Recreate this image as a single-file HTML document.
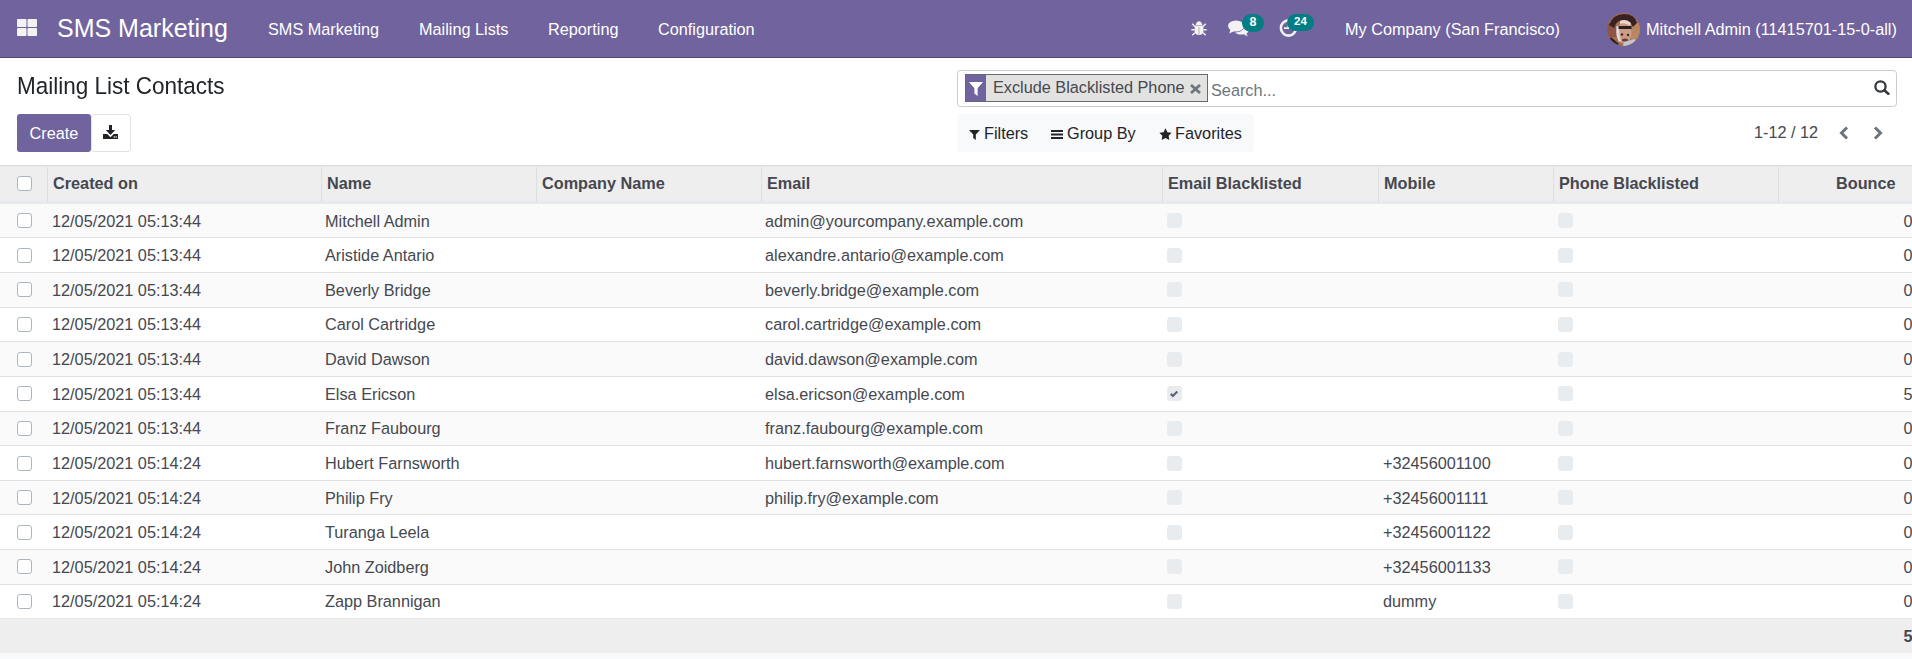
<!DOCTYPE html>
<html><head><meta charset="utf-8">
<style>
*{box-sizing:border-box;margin:0;padding:0}
html,body{width:1912px;height:659px;overflow:hidden;background:#fff}
body{font-family:"Liberation Sans",sans-serif;font-size:16.25px;color:#454850;position:relative}
.a{position:absolute;white-space:nowrap;line-height:1}
#nav{position:absolute;left:0;top:0;width:1912px;height:58px;background:#71639e;border-bottom:1px solid #52487a}
#nav .t{position:absolute;color:#fff;white-space:nowrap;line-height:1}
.badge{position:absolute;background:#017e84;color:#fff;font-weight:bold;font-size:11.5px;border-radius:9px;text-align:center;line-height:15.5px;height:17px}
.row{position:absolute;left:0;width:1912px}
.hl{position:absolute;left:0;width:1912px;height:1px;background:#dee2e6}
.c{position:absolute;white-space:nowrap;line-height:1}
.cb{position:absolute;width:15px;height:15px;border:1px solid #adb5bd;border-radius:3px;background:#fff}
.bl{position:absolute;width:15px;height:15px;border-radius:3.5px;background:#e9ecef}
.bl svg{position:absolute;left:0;top:0}
.th{position:absolute;white-space:nowrap;line-height:1;font-weight:bold}
.vs{position:absolute;top:167px;width:1px;height:35px;background:#dcdfe0}
</style></head>
<body>
<div id="nav">
  <svg class="a" style="left:17px;top:19px" width="20" height="17" viewBox="0 0 20 17"><g fill="#f2f2f2"><rect x="0" y="0" width="9.5" height="8" rx="0.8"/><rect x="10.5" y="0" width="9.5" height="8" rx="0.8"/><rect x="0" y="9" width="9.5" height="8" rx="0.8"/><rect x="10.5" y="9" width="9.5" height="8" rx="0.8"/></g></svg>
  <div class="t" style="left:57px;top:16px;font-size:25px">SMS Marketing</div>
  <div class="t" style="left:268px;top:21px">SMS Marketing</div>
  <div class="t" style="left:419px;top:21px">Mailing Lists</div>
  <div class="t" style="left:548px;top:21px">Reporting</div>
  <div class="t" style="left:658px;top:21px">Configuration</div>
  <div class="t" style="left:1345px;top:21px">My Company (San Francisco)</div>
  <div class="t" style="left:1646px;top:21px">Mitchell Admin (11415701-15-0-all)</div>

  <svg class="a" style="left:1191px;top:21px" width="16" height="16" viewBox="0 0 16 16"><g fill="#f2f2f2"><path d="M4.7 3.9C5 1.6 6.4 0.2 8 0.2s3 1.4 3.3 3.7z"/><path d="M3.6 4.5h8.8v5.7c0 2-1.8 3.8-4.4 3.8s-4.4-1.8-4.4-3.8z"/></g><path stroke="#f2f2f2" stroke-width="1.5" d="M3.9 5.6L1.3 2.8M12.1 5.6l2.6-2.8M3.6 8.8H0.3M12.4 8.8h3.3M3.9 11.8L1.3 14.2M12.1 11.8l2.6 2.4"/><path stroke="#b0b4bc" stroke-width="0.8" d="M3.6 4.5H12.4"/><path stroke="#c8b0a0" stroke-width="1" d="M8 6V13.5"/></svg>
  <svg class="a" style="left:1228px;top:20px" width="21" height="17" viewBox="0 0 21 17"><g fill="#f2f2f2"><ellipse cx="8" cy="6" rx="8" ry="5.6"/><path d="M2.5 9.5L1.2 13.6L6.5 11z"/><path d="M16.6 4.5C19.2 5.6 21 7.5 21 9.6c0 1.6-1 3-2.6 4l1.4 3-4-2.3c-.9.2-1.8.3-2.8.3-2.5 0-4.8-.8-6.2-2.1 5.6.2 10.4-3 9.8-8z"/></g></svg>
  <svg class="a" style="left:1279px;top:18px" width="20" height="20" viewBox="0 0 20 20"><circle cx="9.5" cy="10" r="7.6" stroke="#f2f2f2" stroke-width="2.6" fill="none"/><path stroke="#f2f2f2" stroke-width="1.8" d="M9.5 4.5V10.2M10.3 10.2H5"/></svg>
  <svg class="a" style="left:1607px;top:13px" width="33" height="33" viewBox="0 0 33 33"><defs><clipPath id="cc"><circle cx="16.5" cy="16.5" r="16.4"/></clipPath><filter id="bf" x="-10%" y="-10%" width="120%" height="120%"><feGaussianBlur stdDeviation="0.7"/></filter></defs><g clip-path="url(#cc)"><rect width="33" height="33" fill="#a86e50"/><g filter="url(#bf)"><rect x="0" y="10" width="9" height="14" fill="#8c5444"/><rect x="24" y="10" width="9" height="20" fill="#c0845a"/><circle cx="27" cy="17" r="1" fill="#8898a8"/><circle cx="29" cy="21" r="1" fill="#8898a8"/><circle cx="26" cy="24" r="1" fill="#8898a8"/><path d="M2 12 Q6 1 17 1 Q28 1 30 10 L26 14 Q22 6 15 7 Q9 8 7 15 Z" fill="#3a2424"/><ellipse cx="17" cy="20" rx="7.5" ry="10.5" fill="#cc9c84"/><path d="M9.5 13 Q8.5 22 12 29 L14 28 Q11.5 21 12.5 13Z" fill="#dcdce2"/><path d="M13 8 Q19 5 24 10 L23 13 Q18 9 13 11Z" fill="#ecd6cc"/><rect x="11.5" y="13" width="13" height="3" fill="#2a2020"/><circle cx="15" cy="21.5" r="1.2" fill="#3a2828"/><circle cx="21" cy="22" r="1.2" fill="#3a2828"/><ellipse cx="18" cy="27" rx="3" ry="1.5" fill="#6a3c34"/><path d="M17 29 L28 26 L28 33 L16 33Z" fill="#c4c8cc"/><path d="M4 24 L12 31 L10 33 L2 27Z" fill="#2e2222"/></g></g></svg>
  <div class="badge" style="left:1242px;top:14px;width:22px;height:18px;border-radius:11px;font-size:12.5px;line-height:17.5px">8</div>
  <div class="badge" style="left:1287px;top:14px;width:27px">24</div>
</div>

<div class="a" style="left:17px;top:73.7px;font-size:22.5px;color:#212529;transform:scaleY(1.1);transform-origin:0 0">Mailing List Contacts</div>
<div class="a" style="left:17px;top:114px;width:74px;height:38px;background:#71639e;border-radius:3px;color:#fff;text-align:center;line-height:38px">Create</div>
<div class="a" style="left:91px;top:114px;width:40px;height:38px;background:#fff;border:1px solid #e2e2e2;border-radius:3px"></div>

<div class="a" style="left:957px;top:70px;width:940px;height:37px;border:1px solid #cbcccd;border-radius:3.5px;background:#fff"></div>
<div class="a" style="left:965px;top:74px;width:243px;height:28px;border:1px solid #666a6e;background:#e2e3e1"></div>
<div class="a" style="left:966px;top:75px;width:20px;height:26px;background:#71639e"></div>
<div class="a" style="left:993px;top:79px">Exclude Blacklisted Phone</div>
<div class="a" style="left:1211px;top:82px;color:#6c757d">Search...</div>

<div class="a" style="left:957px;top:114px;width:297px;height:38px;background:#f8f9fa;border-radius:3px"></div>
<div class="a" style="left:984px;top:125px;color:#212529">Filters</div>
<div class="a" style="left:1067px;top:125px;color:#212529">Group By</div>
<div class="a" style="left:1175px;top:125px;color:#212529">Favorites</div>
<div class="a" style="left:1754px;top:124px">1-12 / 12</div>

<svg class="a" style="left:103px;top:125px" width="15" height="14" viewBox="0 0 15 14"><path fill="#212529" d="M6 0h3v5h3.2L7.5 10 2.8 5H6z"/><path fill="#212529" d="M0 9h4.3l3.2 3.2L10.7 9H15v5H0z"/><circle cx="11.3" cy="12" r="0.75" fill="#fff"/><circle cx="13.2" cy="12" r="0.75" fill="#fff"/></svg>
<svg class="a" style="left:969px;top:82px" width="14" height="14" viewBox="0 0 14 14"><path fill="#fff" d="M0 0H14L8.6 6.2V14L5.4 11.6V6.2Z"/></svg>
<svg class="a" style="left:1190px;top:84px" width="11" height="10" viewBox="0 0 11 10"><path stroke="#6c757d" stroke-width="2.8" d="M1 1L10 9M10 1L1 9"/></svg>
<svg class="a" style="left:1874px;top:80px" width="16" height="15" viewBox="0 0 16 15"><circle cx="6.5" cy="6.5" r="5.1" stroke="#343a40" stroke-width="2.3" fill="none"/><path stroke="#343a40" stroke-width="2.6" stroke-linecap="round" d="M10.3 10.3L14.3 13.8"/></svg>
<svg class="a" style="left:969px;top:130px" width="11" height="10" viewBox="0 0 11 10"><path fill="#212529" d="M0 0H11L6.8 4.4V10L4.2 8V4.4Z"/></svg>
<svg class="a" style="left:1051px;top:130px" width="12" height="9" viewBox="0 0 12 9"><path fill="#212529" d="M0 0h12v2H0zM0 3.5h12v2H0zM0 7h12v2H0z"/></svg>
<svg class="a" style="left:1158.5px;top:127.5px" width="13" height="13" viewBox="0 0 12.6 12.6"><path fill="#212529" d="M6.30 0.30 L8.18 4.01 L12.29 4.65 L9.34 7.59 L10.00 11.70 L6.30 9.80 L2.60 11.70 L3.26 7.59 L0.31 4.65 L4.42 4.01Z"/></svg>
<svg class="a" style="left:1839px;top:126px" width="10" height="14" viewBox="0 0 10 14"><path stroke="#6c757d" stroke-width="3" fill="none" d="M8 1.5L2.5 7L8 12.5"/></svg>
<svg class="a" style="left:1873px;top:126px" width="10" height="14" viewBox="0 0 10 14"><path stroke="#6c757d" stroke-width="3" fill="none" d="M2 1.5L7.5 7L2 12.5"/></svg>


<!-- table header -->
<div class="a" style="left:0;top:165px;width:1912px;height:1px;background:#dbdddd"></div>
<div class="a" style="left:0;top:166px;width:1912px;height:1px;background:#e6e8eb"></div>
<div class="a" style="left:0;top:167px;width:1912px;height:34px;background:#eee"></div>
<div class="a" style="left:0;top:201px;width:1912px;height:3px;background:#e6e9ed"></div>
<span class="cb" style="left:17px;top:176px"></span>
<div class="vs" style="left:47px"></div>
<div class="vs" style="left:321px"></div>
<div class="vs" style="left:536px"></div>
<div class="vs" style="left:761px"></div>
<div class="vs" style="left:1162px"></div>
<div class="vs" style="left:1378px"></div>
<div class="vs" style="left:1553px"></div>
<div class="vs" style="left:1778px"></div>
<div class="th" style="left:53px;top:175px">Created on</div>
<div class="th" style="left:327px;top:175px">Name</div>
<div class="th" style="left:542px;top:175px">Company Name</div>
<div class="th" style="left:767px;top:175px">Email</div>
<div class="th" style="left:1168px;top:175px">Email Blacklisted</div>
<div class="th" style="left:1384px;top:175px">Mobile</div>
<div class="th" style="left:1559px;top:175px">Phone Blacklisted</div>
<div class="th" style="left:1836px;top:175px">Bounce</div>

<div class="row" style="top:204px;height:33px;background:#fafafa"></div>
<div class="hl" style="top:237px"></div>
<span class="cb" style="left:17px;top:213.00px"></span>
<div class="c" style="left:52px;top:213.00px">12/05/2021 05:13:44</div>
<div class="c" style="left:325px;top:213.00px">Mitchell Admin</div>
<div class="c" style="left:765px;top:213.00px">admin@yourcompany.example.com</div>
<span class="bl" style="left:1167px;top:213.00px"></span>
<span class="bl" style="left:1558px;top:213.00px"></span>
<div class="c" style="left:1903.5px;top:213.00px">0</div>
<div class="row" style="top:238px;height:34px;background:#fff"></div>
<div class="hl" style="top:272px"></div>
<span class="cb" style="left:17px;top:248.00px"></span>
<div class="c" style="left:52px;top:247.00px">12/05/2021 05:13:44</div>
<div class="c" style="left:325px;top:247.00px">Aristide Antario</div>
<div class="c" style="left:765px;top:247.00px">alexandre.antario@example.com</div>
<span class="bl" style="left:1167px;top:248.00px"></span>
<span class="bl" style="left:1558px;top:248.00px"></span>
<div class="c" style="left:1903.5px;top:247.00px">0</div>
<div class="row" style="top:273px;height:34px;background:#fafafa"></div>
<div class="hl" style="top:307px"></div>
<span class="cb" style="left:17px;top:282.00px"></span>
<div class="c" style="left:52px;top:282.00px">12/05/2021 05:13:44</div>
<div class="c" style="left:325px;top:282.00px">Beverly Bridge</div>
<div class="c" style="left:765px;top:282.00px">beverly.bridge@example.com</div>
<span class="bl" style="left:1167px;top:282.00px"></span>
<span class="bl" style="left:1558px;top:282.00px"></span>
<div class="c" style="left:1903.5px;top:282.00px">0</div>
<div class="row" style="top:308px;height:33px;background:#fff"></div>
<div class="hl" style="top:341px"></div>
<span class="cb" style="left:17px;top:317.00px"></span>
<div class="c" style="left:52px;top:316.00px">12/05/2021 05:13:44</div>
<div class="c" style="left:325px;top:316.00px">Carol Cartridge</div>
<div class="c" style="left:765px;top:316.00px">carol.cartridge@example.com</div>
<span class="bl" style="left:1167px;top:317.00px"></span>
<span class="bl" style="left:1558px;top:317.00px"></span>
<div class="c" style="left:1903.5px;top:316.00px">0</div>
<div class="row" style="top:342px;height:34px;background:#fafafa"></div>
<div class="hl" style="top:376px"></div>
<span class="cb" style="left:17px;top:352.00px"></span>
<div class="c" style="left:52px;top:351.00px">12/05/2021 05:13:44</div>
<div class="c" style="left:325px;top:351.00px">David Dawson</div>
<div class="c" style="left:765px;top:351.00px">david.dawson@example.com</div>
<span class="bl" style="left:1167px;top:352.00px"></span>
<span class="bl" style="left:1558px;top:352.00px"></span>
<div class="c" style="left:1903.5px;top:351.00px">0</div>
<div class="row" style="top:377px;height:34px;background:#fff"></div>
<div class="hl" style="top:411px"></div>
<span class="cb" style="left:17px;top:386.00px"></span>
<div class="c" style="left:52px;top:386.00px">12/05/2021 05:13:44</div>
<div class="c" style="left:325px;top:386.00px">Elsa Ericson</div>
<div class="c" style="left:765px;top:386.00px">elsa.ericson@example.com</div>
<span class="bl" style="left:1167px;top:386.00px"><svg width="15" height="15" viewBox="0 0 15 15"><path d="M3.8 7.9 L5.9 10 L10.3 5.4" stroke="#5f6670" stroke-width="2.2" fill="none"/></svg></span>
<span class="bl" style="left:1558px;top:386.00px"></span>
<div class="c" style="left:1903.5px;top:386.00px">5</div>
<div class="row" style="top:412px;height:33px;background:#fafafa"></div>
<div class="hl" style="top:445px"></div>
<span class="cb" style="left:17px;top:421.00px"></span>
<div class="c" style="left:52px;top:420.00px">12/05/2021 05:13:44</div>
<div class="c" style="left:325px;top:420.00px">Franz Faubourg</div>
<div class="c" style="left:765px;top:420.00px">franz.faubourg@example.com</div>
<span class="bl" style="left:1167px;top:421.00px"></span>
<span class="bl" style="left:1558px;top:421.00px"></span>
<div class="c" style="left:1903.5px;top:420.00px">0</div>
<div class="row" style="top:446px;height:34px;background:#fff"></div>
<div class="hl" style="top:480px"></div>
<span class="cb" style="left:17px;top:456.00px"></span>
<div class="c" style="left:52px;top:455.00px">12/05/2021 05:14:24</div>
<div class="c" style="left:325px;top:455.00px">Hubert Farnsworth</div>
<div class="c" style="left:765px;top:455.00px">hubert.farnsworth@example.com</div>
<span class="bl" style="left:1167px;top:456.00px"></span>
<div class="c" style="left:1383px;top:455.00px">+32456001100</div>
<span class="bl" style="left:1558px;top:456.00px"></span>
<div class="c" style="left:1903.5px;top:455.00px">0</div>
<div class="row" style="top:481px;height:33px;background:#fafafa"></div>
<div class="hl" style="top:514px"></div>
<span class="cb" style="left:17px;top:490.00px"></span>
<div class="c" style="left:52px;top:490.00px">12/05/2021 05:14:24</div>
<div class="c" style="left:325px;top:490.00px">Philip Fry</div>
<div class="c" style="left:765px;top:490.00px">philip.fry@example.com</div>
<span class="bl" style="left:1167px;top:490.00px"></span>
<div class="c" style="left:1383px;top:490.00px">+32456001111</div>
<span class="bl" style="left:1558px;top:490.00px"></span>
<div class="c" style="left:1903.5px;top:490.00px">0</div>
<div class="row" style="top:515px;height:34px;background:#fff"></div>
<div class="hl" style="top:549px"></div>
<span class="cb" style="left:17px;top:525.00px"></span>
<div class="c" style="left:52px;top:524.00px">12/05/2021 05:14:24</div>
<div class="c" style="left:325px;top:524.00px">Turanga Leela</div>
<span class="bl" style="left:1167px;top:525.00px"></span>
<div class="c" style="left:1383px;top:524.00px">+32456001122</div>
<span class="bl" style="left:1558px;top:525.00px"></span>
<div class="c" style="left:1903.5px;top:524.00px">0</div>
<div class="row" style="top:550px;height:34px;background:#fafafa"></div>
<div class="hl" style="top:584px"></div>
<span class="cb" style="left:17px;top:559.00px"></span>
<div class="c" style="left:52px;top:559.00px">12/05/2021 05:14:24</div>
<div class="c" style="left:325px;top:559.00px">John Zoidberg</div>
<span class="bl" style="left:1167px;top:559.00px"></span>
<div class="c" style="left:1383px;top:559.00px">+32456001133</div>
<span class="bl" style="left:1558px;top:559.00px"></span>
<div class="c" style="left:1903.5px;top:559.00px">0</div>
<div class="row" style="top:585px;height:33px;background:#fff"></div>
<span class="cb" style="left:17px;top:594.00px"></span>
<div class="c" style="left:52px;top:593.00px">12/05/2021 05:14:24</div>
<div class="c" style="left:325px;top:593.00px">Zapp Brannigan</div>
<span class="bl" style="left:1167px;top:594.00px"></span>
<div class="c" style="left:1383px;top:593.00px">dummy</div>
<span class="bl" style="left:1558px;top:594.00px"></span>
<div class="c" style="left:1903.5px;top:593.00px">0</div>

<div class="a" style="left:0;top:618px;width:1912px;height:1px;background:#e6e8ea"></div>
<div class="a" style="left:0;top:619px;width:1912px;height:34px;background:#eee"></div>
<div class="a" style="left:0;top:653px;width:1912px;height:6px;background:#f8f9fa"></div>
<div class="th" style="left:1903.5px;top:628px">5</div>
</body></html>
